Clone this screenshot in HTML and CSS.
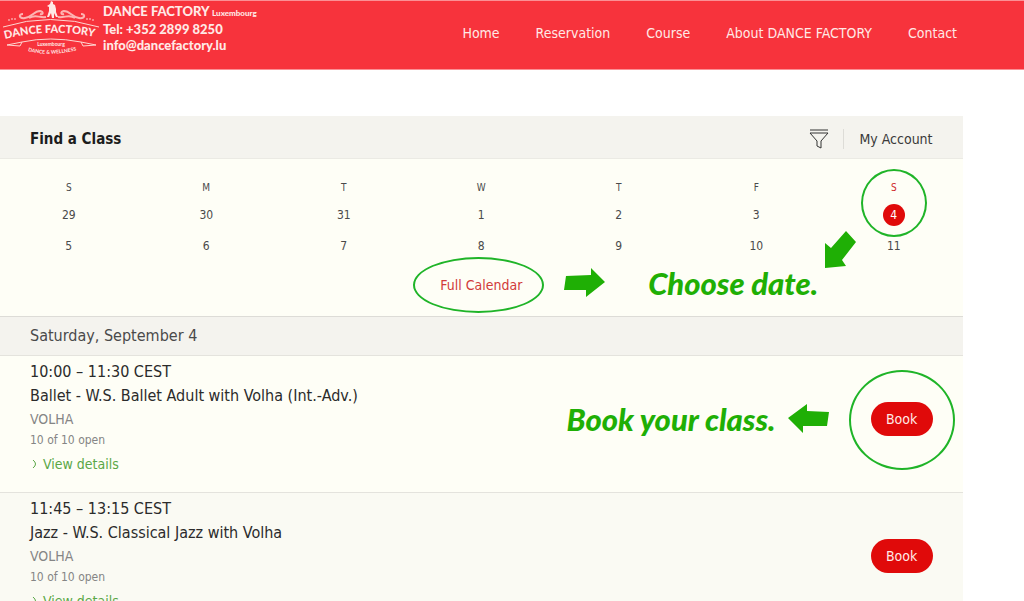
FILE: index.html
```html
<!DOCTYPE html>
<html lang="en">
<head>
    <meta charset="UTF-8">
    <meta name="viewport" content="width=device-width, initial-scale=1.0">
    <title>DANCE FACTORY Luxembourg - Reservation</title>
    <link rel="stylesheet" href="styles.css">
</head>
<body>
    <header class="site-header">
        <a class="brand" href="#">
            <svg class="logo" viewBox="0 0 100 58" role="img" aria-label="Dance Factory logo">
                <defs>
                    <path id="name-arc" d="M5 38Q50 26 100 37"/>
                    <path id="tag-arc" d="M28 50Q50 56 78 49"/>
                </defs>
                <!-- dancing couple -->
                <path class="fill" d="M51 0l2 1 0 2 2 1 1 4 0 3 2 5-2 0-2-4 0 5-2 0-1-5-2 4-2 0 2-6 0-4-2-1 3-2z"/>
                <!-- flourishes -->
                <g class="soft">
                    <path d="M23 13C18 13 19 18 25 17C32 16 34 10 40 10C44 11 43 14 40 13"/>
                    <path d="M29 17C35 13 39 17 46 16"/>
                    <path d="M81 13C86 13 85 18 79 17C72 16 70 10 64 10C60 11 61 14 64 13"/>
                    <path d="M75 17C69 13 65 17 58 16"/>
                </g>
                <g class="dots">
                    <circle cx="9" cy="19" r="1"/><circle cx="12" cy="18" r="1"/><circle cx="15" cy="18" r="1"/>
                    <circle cx="87" cy="18" r="1"/><circle cx="90" cy="18" r="1"/><circle cx="93" cy="19" r="1"/>
                </g>
                <path class="line" d="M3 26Q50 11 99 26"/>
                <path class="line" d="M22 41Q50 35 81 41M7 44L22 41 20 45zM96 44L81 41 83 45z"/>
                <text class="logo-name"><textPath href="#name-arc">DANCE FACTORY</textPath></text>
                <text class="logo-city" x="51" y="45">Luxembourg</text>
                <text class="logo-tag"><textPath href="#tag-arc">DANCE &amp; WELLNESS</textPath></text>
            </svg>
            <span class="brand-text">
                <span>DANCE FACTORY <small>Luxembourg</small></span>
                <span>Tel: +352 2899 8250</span>
                <span>info@dancefactory.lu</span>
            </span>
        </a>
        <nav class="main-nav">
            <a href="#">Home</a>
            <a href="#">Reservation</a>
            <a href="#">Course</a>
            <a href="#">About DANCE FACTORY</a>
            <a href="#">Contact</a>
        </nav>
    </header>

    <main class="booking">
        <div class="booking-bar">
            <h1>Find a Class</h1>
            <div class="tools">
                <button class="filter-btn" type="button" aria-label="Filter classes">
                    <svg width="20" height="20" viewBox="0 0 20 20">
                        <path d="M1 1H19M1 4H19L12 12V19L8 17V12L1 4"/>
                    </svg>
                </button>
                <a class="account" href="#">My Account</a>
            </div>
        </div>

        <section class="calendar">
            <table class="days">
                <thead>
                    <tr><th>S</th><th>M</th><th>T</th><th>W</th><th>T</th><th>F</th><th class="current">S</th></tr>
                </thead>
                <tbody>
                    <tr>
                        <td><button type="button">29</button></td>
                        <td><button type="button">30</button></td>
                        <td><button type="button">31</button></td>
                        <td><button type="button">1</button></td>
                        <td><button type="button">2</button></td>
                        <td><button type="button">3</button></td>
                        <td><button class="selected" type="button">4</button></td>
                    </tr>
                    <tr>
                        <td><button type="button">5</button></td>
                        <td><button type="button">6</button></td>
                        <td><button type="button">7</button></td>
                        <td><button type="button">8</button></td>
                        <td><button type="button">9</button></td>
                        <td><button type="button">10</button></td>
                        <td><button type="button">11</button></td>
                    </tr>
                </tbody>
            </table>
            <a class="full-calendar" href="#">Full Calendar</a>

            <div class="hint hint-date">
                <svg width="42" height="30" viewBox="0 0 42 30"><path d="M2 8L27 7V0L41 14L22 29V22H0z"/></svg>
                <span>Choose date.</span>
            </div>
            <svg class="hint-arrow" width="31" height="37" viewBox="0 0 31 37"><path d="M21 0L31 11L17 29L21 35L0 37V12L6 17z"/></svg>
        </section>

        <h2 class="date-heading">Saturday, September 4</h2>

        <article class="class-row">
            <div class="class-info">
                <p class="title">10:00 – 11:30 CEST</p>
                <h3 class="title">Ballet - W.S. Ballet Adult with Volha (Int.-Adv.)</h3>
                <p class="teacher">VOLHA</p>
                <p class="spots">10 of 10 open</p>
                <a class="details" href="#"><svg width="5" height="10" viewBox="0 0 5 10"><path d="M1 1Q6 5 1 9"/></svg>View details</a>
            </div>
            <div class="hint hint-book">
                <span>Book your class.</span>
                <svg width="42" height="30" viewBox="0 0 42 30"><path d="M0 14L19 0V7L41 8L39 22H15V29z"/></svg>
            </div>
            <button class="book-btn circled" type="button">Book</button>
        </article>

        <article class="class-row alt">
            <div class="class-info">
                <p class="title">11:45 – 13:15 CEST</p>
                <h3 class="title">Jazz - W.S. Classical Jazz with Volha</h3>
                <p class="teacher">VOLHA</p>
                <p class="spots">10 of 10 open</p>
                <a class="details" href="#"><svg width="5" height="10" viewBox="0 0 5 10"><path d="M1 1Q6 5 1 9"/></svg>View details</a>
            </div>
            <button class="book-btn" type="button">Book</button>
        </article>
    </main>
</body>
</html>
```
FILE: styles.css
```css
* {
    box-sizing: border-box;
}

body {
    margin: 0;
    background-color: #ffffff;
    color: #2b2b2b;
    font-family: 'DejaVu Sans Condensed', 'DejaVu Sans', sans-serif;
    font-size: 14px;
}

h1, h2, h3, p {
    margin: 0;
    font-weight: 400;
}

a {
    text-decoration: none;
}

button {
    border: none;
    padding: 0;
    background: none;
    font: inherit;
    color: inherit;
    cursor: pointer;
}

/* Header */
.site-header {
    display: flex;
    justify-content: space-between;
    align-items: flex-start;
    padding-right: 67px;
    height: 70px;
    background-color: #f7333c;
    border-top: 1px solid #fb9095;
    border-bottom: 1px solid #fb9095;
}

.brand {
    display: flex;
    gap: 3px;
    color: #ffe9e6;
}

.logo {
    width: 100px;
    height: 58px;
}

.logo .fill,
.logo .dots {
    fill: #ffe9e6;
}

.logo .dots {
    opacity: 0.6;
}

.logo .soft,
.logo .line {
    fill: none;
    stroke: #ffd5d0;
    stroke-width: 1;
}

.logo .soft {
    stroke-width: 2;
    opacity: 0.8;
}

.logo text {
    font-family: Lato, sans-serif;
    font-weight: 700;
    fill: #ffe9e6;
}

.logo .logo-name {
    font-size: 11px;
    font-weight: 900;
}

.logo .logo-city {
    font-size: 5px;
    text-anchor: middle;
}

.logo .logo-tag {
    font-size: 5px;
}

.brand-text {
    display: flex;
    flex-direction: column;
    padding-top: 2px;
    font-family: Lato, sans-serif;
    font-size: 13px;
    font-weight: 900;
    line-height: 16px;
}

.brand-text small {
    font-size: 8px;
}

.main-nav {
    display: flex;
    gap: 36px;
    padding-top: 22px;
    line-height: 20px;
}

.main-nav a {
    color: #ffe9e6;
}

/* Booking widget */
.booking {
    width: 94%;
    margin-top: 46px;
    background-color: #fefef6;
}

.booking-bar {
    display: flex;
    justify-content: space-between;
    align-items: center;
    height: 43px;
    padding: 4px 30px 0;
    background-color: #f4f3ee;
    border-bottom: 1px solid #ebeae4;
}

.booking-bar h1 {
    font-size: 15px;
    font-weight: 700;
    color: #1c1c1c;
}

.tools {
    display: flex;
    align-items: center;
    gap: 14px;
}

.filter-btn svg {
    display: block;
    fill: none;
    stroke: #333333;
    stroke-width: 1;
}

.account {
    padding-left: 15px;
    border-left: 1px solid #dddcd7;
    line-height: 20px;
    color: #3a3a3a;
}

/* Calendar */
.calendar {
    position: relative;
    display: flex;
    flex-direction: column;
    align-items: center;
    padding: 17px 0 21px;
    border-bottom: 1px solid #dddcd7;
}

.days {
    width: 100%;
    table-layout: fixed;
    border-collapse: collapse;
    font-size: 12px;
    text-align: center;
    color: #4a4a4a;
}

.days th {
    height: 23px;
    padding: 0;
    font-size: 10px;
    font-weight: 400;
}

.days th.current {
    color: #cf2a2a;
}

.days td {
    height: 31px;
    padding: 0;
}

.days button {
    width: 22px;
    height: 22px;
    line-height: 22px;
    border-radius: 50%;
}

.days .selected {
    position: relative;
    background-color: #e00a0a;
    color: #ffffff;
}

/* Hand-drawn rings */
.days .selected::after,
.full-calendar::after,
.circled::after {
    content: '';
    position: absolute;
    border: 2px solid #1fb428;
    border-radius: 50%;
}

.days .selected::after {
    inset: -35px -22px -11px;
}

.full-calendar {
    position: relative;
    margin-top: 14px;
    line-height: 20px;
    color: #d13a3a;
}

.full-calendar::after {
    inset: -18px -22px -18px -27px;
}

/* Green hints */
.hint {
    display: flex;
    align-items: center;
    font-family: Lato, sans-serif;
    font-size: 31px;
    font-weight: 900;
    font-style: italic;
    line-height: 32px;
    color: #1faf05;
}

.hint svg,
.hint-arrow {
    fill: #1faf05;
}

.hint-date {
    position: absolute;
    right: 15%;
    bottom: 17px;
    gap: 42px;
}

.hint-arrow {
    position: absolute;
    right: 107px;
    bottom: 48px;
}

/* Class list */
.date-heading {
    padding: 8px 30px;
    background-color: #f4f3ee;
    border-bottom: 1px solid #e4e3dd;
    font-size: 16px;
    line-height: 22px;
    color: #4a4a4a;
}

.class-row {
    display: flex;
    align-items: center;
    padding: 4px 30px 15px;
    border-bottom: 1px solid #e4e3dd;
}

.class-row.alt {
    background-color: #fafaf3;
}

.class-info {
    flex: 1;
}

.class-info .title {
    font-size: 16px;
    line-height: 24px;
}

.teacher {
    font-size: 14px;
    line-height: 22px;
    color: #858585;
}

.spots {
    font-size: 12px;
    line-height: 20px;
    color: #858585;
}

.details {
    display: flex;
    align-items: center;
    gap: 6px;
    padding: 1px 0 0 2px;
    line-height: 26px;
    color: #5aa746;
}

.details svg {
    fill: none;
    stroke: #5aa746;
    stroke-width: 1;
}

.hint-book {
    gap: 12px;
    margin-right: 41px;
}

.book-btn {
    position: relative;
    width: 62px;
    height: 34px;
    border-radius: 17px;
    background-color: #e00a0a;
    color: #ffe9e6;
}

.circled::after {
    inset: -32px -22px -34px;
}
```
